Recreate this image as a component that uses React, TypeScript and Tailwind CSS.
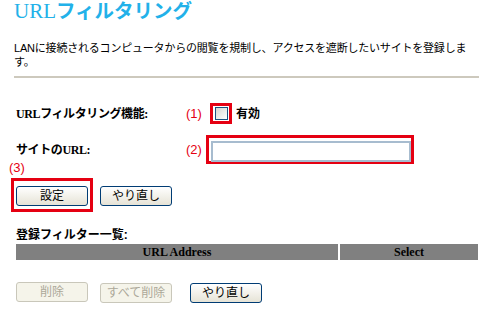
const serif = { fontFamily: '"Liberation Serif", "Noto Sans CJK JP", serif' };
const sans = { fontFamily: '"Liberation Sans", "Noto Sans CJK JP", sans-serif' };

function Btn({ label, disabled }: { label: string; disabled?: boolean }) {
  return (
    <button
      disabled={disabled}
      style={sans}
      className={
        disabled
          ? "w-[72px] h-[20px] rounded-[3px] border border-[#c9c7ba] bg-[#f5f4ea] text-[12px] leading-[18px] text-[#aca899]"
          : "w-[72px] h-[20px] rounded-[3px] border border-[#003c74] bg-gradient-to-b from-white to-[#e6e3d6] text-[12px] leading-[18px] text-black"
      }
    >
      {label}
    </button>
  );
}

export default function App() {
  return (
    <div className="w-[500px] h-[323px] bg-white overflow-hidden text-black" style={sans}>
      {/* header */}
      <div className="pl-[14px] pr-[21px]">
        <h1 className="h-[22px] flex items-end text-[#22b1e9] whitespace-nowrap">
          <span className="text-[21px] leading-[22px]" style={serif}>URL</span>
          <span className="text-[19.5px] leading-[22px] font-bold">フィルタリング</span>
        </h1>
        <p className="mt-[19px] text-[11px] leading-[14px] tracking-[-0.2px]">
          LANに接続されるコンピュータからの閲覧を規制し、アクセスを遮断したいサイトを登録しま
          <br />
          す。
        </p>
        <div className="mt-[7px] h-[2px] bg-[#cdc9bd]" />
      </div>

      {/* row 1 */}
      <div className="mt-[25px] h-[21px] flex items-center pl-[16px]">
        <div className="w-[170px] text-[12px] font-bold tracking-[-0.4px]" style={serif}>URLフィルタリング機能:</div>
        <div className="w-[24px] text-[13px] leading-[14px] text-[#e50012]">(1)</div>
        <div className="w-[22px] h-[21px] border-[3px] border-[#e50012] flex items-center justify-center">
          <div className="w-[13px] h-[13px] border border-[#1c5180] bg-gradient-to-br from-[#d6d5cf] to-white" />
        </div>
        <div className="ml-[4px] text-[12px] font-bold">有効</div>
      </div>

      {/* row 2 */}
      <div className="mt-[11px] h-[29px] flex items-center pl-[16px]">
        <div className="w-[170px] text-[12px] font-bold tracking-[-0.4px]" style={serif}>サイトのURL:</div>
        <div className="w-[20px] text-[13px] leading-[14px] text-[#e50012]">(2)</div>
        <div className="w-[208px] h-[29px] border-[3px] border-[#e50012] p-[1px] pl-[2px]">
          <input className="w-[200px] h-[21px] border-2 border-[#a7bccf] bg-white outline-none" />
        </div>
      </div>

      {/* row 3 */}
      <div className="-mt-[3px] h-[14px] pl-[9px] text-[13px] leading-[14px] text-[#e50012]">(3)</div>
      <div className="mt-[3px] flex items-center pl-[11px]">
        <div className="border-[3px] border-[#e50012] p-[2px]">
          <Btn label="設定" />
        </div>
        <div className="ml-[7px]">
          <Btn label="やり直し" />
        </div>
      </div>

      {/* list */}
      <div className="pl-[16px] pr-[22px]">
        <div className="mt-[16px] h-[14px] text-[12px] leading-[14px] font-bold">登録フィルター一覧:</div>
        <div className="mt-[2px] flex gap-[2px] h-[16px] text-[12px] leading-[16px] font-bold" style={serif}>
          <div className="w-[322px] bg-[#808080] text-center">URL Address</div>
          <div className="flex-1 bg-[#808080] text-center">Select</div>
        </div>
        <div className="mt-[20px] flex items-center">
          <Btn label="削除" disabled />
          <div className="ml-[12px]">
            <Btn label="すべて削除" disabled />
          </div>
          <div className="ml-[18px]">
            <Btn label="やり直し" />
          </div>
        </div>
      </div>
    </div>
  );
}
